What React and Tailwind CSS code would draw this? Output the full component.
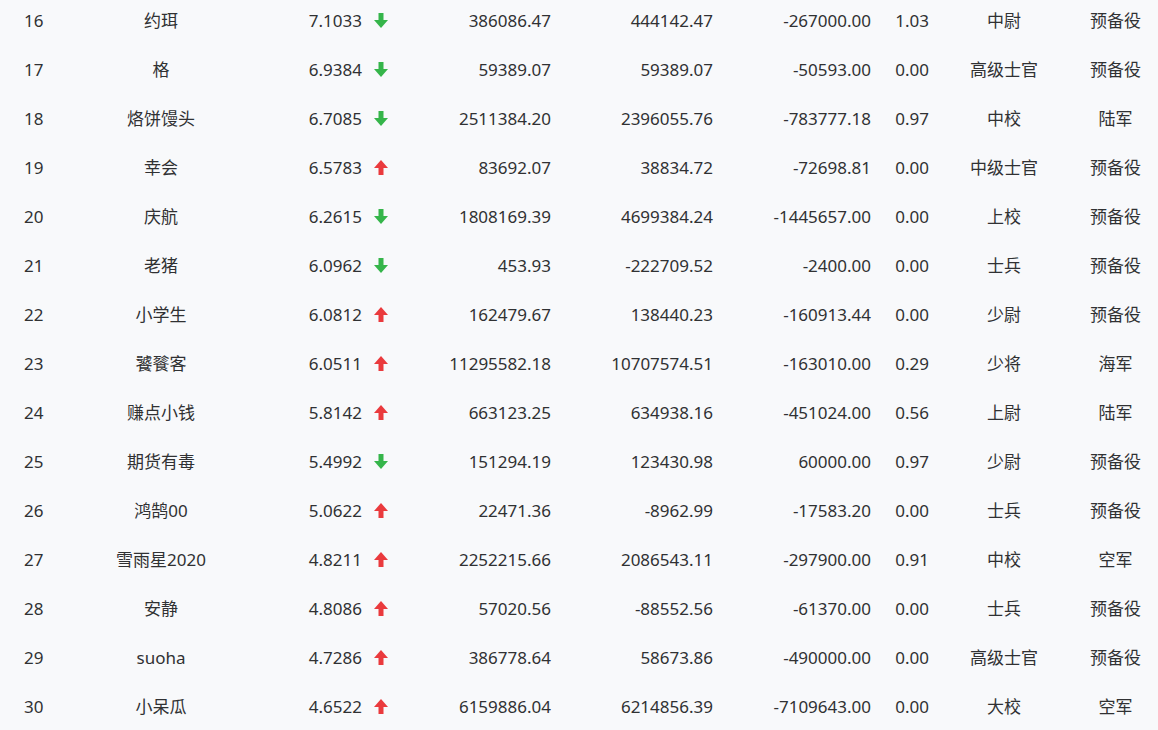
import React from "react";

const rows = [
  ["16", "约珥", "7.1033", "down", "386086.47", "444142.47", "-267000.00", "1.03", "中尉", "预备役"],
  ["17", "格", "6.9384", "down", "59389.07", "59389.07", "-50593.00", "0.00", "高级士官", "预备役"],
  ["18", "烙饼馒头", "6.7085", "down", "2511384.20", "2396055.76", "-783777.18", "0.97", "中校", "陆军"],
  ["19", "幸会", "6.5783", "up", "83692.07", "38834.72", "-72698.81", "0.00", "中级士官", "预备役"],
  ["20", "庆航", "6.2615", "down", "1808169.39", "4699384.24", "-1445657.00", "0.00", "上校", "预备役"],
  ["21", "老猪", "6.0962", "down", "453.93", "-222709.52", "-2400.00", "0.00", "士兵", "预备役"],
  ["22", "小学生", "6.0812", "up", "162479.67", "138440.23", "-160913.44", "0.00", "少尉", "预备役"],
  ["23", "饕餮客", "6.0511", "up", "11295582.18", "10707574.51", "-163010.00", "0.29", "少将", "海军"],
  ["24", "赚点小钱", "5.8142", "up", "663123.25", "634938.16", "-451024.00", "0.56", "上尉", "陆军"],
  ["25", "期货有毒", "5.4992", "down", "151294.19", "123430.98", "60000.00", "0.97", "少尉", "预备役"],
  ["26", "鸿鹄00", "5.0622", "up", "22471.36", "-8962.99", "-17583.20", "0.00", "士兵", "预备役"],
  ["27", "雪雨星2020", "4.8211", "up", "2252215.66", "2086543.11", "-297900.00", "0.91", "中校", "空军"],
  ["28", "安静", "4.8086", "up", "57020.56", "-88552.56", "-61370.00", "0.00", "士兵", "预备役"],
  ["29", "suoha", "4.7286", "up", "386778.64", "58673.86", "-490000.00", "0.00", "高级士官", "预备役"],
  ["30", "小呆瓜", "4.6522", "up", "6159886.04", "6214856.39", "-7109643.00", "0.00", "大校", "空军"],
];

function Arrow({ dir }) {
  if (dir === "down") {
    return (
      <svg width="14" height="15" viewBox="0 0 14 15" className="shrink-0">
        <rect x="4.5" y="0" width="5" height="8" fill="#35b54a" />
        <polygon points="0,7 14,7 7,15" fill="#35b54a" />
      </svg>
    );
  }
  return (
    <svg width="14" height="15" viewBox="0 0 14 15" className="shrink-0">
      <polygon points="7,0 14,8 0,8" fill="#ea3a3d" />
      <rect x="4.5" y="7" width="5" height="8" fill="#ea3a3d" />
    </svg>
  );
}

export default function App() {
  return (
    <div
      className="w-[1158px] h-[730px] overflow-hidden bg-[#f8f9fb] text-[#303133] text-[17px]"
      style={{ fontFamily: '"Noto Sans", "Noto Sans CJK SC", sans-serif' }}
    >
      <div className="-mt-[4px]">
        {rows.map((r) => (
          <div
            key={r[0]}
            className="grid grid-cols-[80px_162px_158px_160px_162px_158px_60px_128px_90px] h-[49px] items-center whitespace-nowrap"
          >
            <div className="pl-[24px]">{r[0]}</div>
            <div className="text-center">{r[1]}</div>
            <div className="flex items-center justify-end gap-[12px] pr-[12px]">
              <span>{r[2]}</span>
              <Arrow dir={r[3]} />
            </div>
            <div className="text-right pr-[9px]">{r[4]}</div>
            <div className="text-right pr-[9px]">{r[5]}</div>
            <div className="text-right pr-[9px]">{r[6]}</div>
            <div className="text-right pr-[11px]">{r[7]}</div>
            <div className="text-center">{r[8]}</div>
            <div className="text-center pl-[5px]">{r[9]}</div>
          </div>
        ))}
      </div>
    </div>
  );
}
